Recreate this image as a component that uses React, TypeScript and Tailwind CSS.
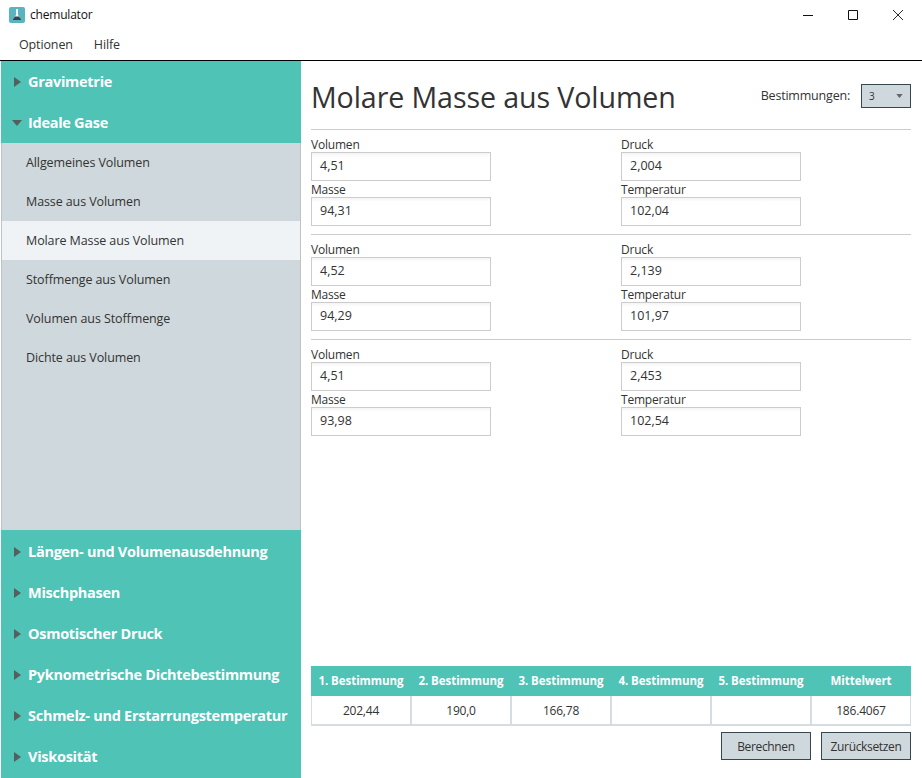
const FONT = "font-['Open_Sans','Noto_Sans',sans-serif]";

const TOP_SECTIONS = ["Gravimetrie", "Ideale Gase"];
const BOTTOM_SECTIONS = [
  "Längen- und Volumenausdehnung",
  "Mischphasen",
  "Osmotischer Druck",
  "Pyknometrische Dichtebestimmung",
  "Schmelz- und Erstarrungstemperatur",
  "Viskosität",
];
const ITEMS = [
  "Allgemeines Volumen",
  "Masse aus Volumen",
  "Molare Masse aus Volumen",
  "Stoffmenge aus Volumen",
  "Volumen aus Stoffmenge",
  "Dichte aus Volumen",
];
const GROUPS = [
  { volumen: "4,51", druck: "2,004", masse: "94,31", temperatur: "102,04" },
  { volumen: "4,52", druck: "2,139", masse: "94,29", temperatur: "101,97" },
  { volumen: "4,51", druck: "2,453", masse: "93,98", temperatur: "102,54" },
];
const COLUMNS = [
  { head: "1. Bestimmung", value: "202,44" },
  { head: "2. Bestimmung", value: "190,0" },
  { head: "3. Bestimmung", value: "166,78" },
  { head: "4. Bestimmung", value: "" },
  { head: "5. Bestimmung", value: "" },
  { head: "Mittelwert", value: "186.4067" },
];

function Section({ title, open, low }: { title: string; open?: boolean; low?: boolean }) {
  return (
    <div className={`flex h-[41px] items-center bg-[#4fc3b5] pl-[11px] ${low ? "pt-[2px]" : ""}`}>
      <svg width="10" height="10" viewBox="0 0 10 10" className="mr-[6px] shrink-0 fill-[#55605e]">
        {open ? <path d="M0 2h10L5 8z" /> : <path d="M2 0l7 5-7 5z" />}
      </svg>
      <span className="whitespace-nowrap text-[14.5px] font-bold tracking-[-0.28px] text-white">{title}</span>
    </div>
  );
}

function Field({ label, value }: { label: string; value: string }) {
  return (
    <div className="mb-[1px] flex flex-col">
      <span className="h-[15px] text-[12px] leading-[16px] tracking-[-0.2px] text-[#333]">{label}</span>
      <div className="flex h-[29px] w-[180px] items-center border border-[#ccc] bg-gradient-to-b from-[#f4f4f4] to-white to-[4px] pl-[8px] text-[12.5px] text-[#333]">
        {value}
      </div>
    </div>
  );
}

function ActionButton({ label }: { label: string }) {
  return (
    <div className="flex h-[28px] w-[90px] items-center justify-center border border-[#36474f] bg-[#cfd8dc] pt-[2px] text-[12px] tracking-[-0.35px] text-[#333]">
      {label}
    </div>
  );
}

export default function App() {
  return (
    <div className={`flex h-[778px] w-[922px] flex-col overflow-hidden bg-white ${FONT}`}>
      <div className="flex h-[30px] items-center justify-between">
        <div className="flex items-center pl-[9px]">
          <svg width="16" height="16" viewBox="0 0 16 16">
            <rect width="16" height="16" rx="2" fill="#5ab4bd" />
            <path d="M7 2h2v1H9v5l3 4v1H4v-1l3-4V3z" fill="#f2f6f6" />
            <path d="M6 9.5h4l2 2.5v1H4v-1z" fill="#33474f" />
          </svg>
          <span className="ml-[5px] text-[12px] tracking-[-0.2px] text-[#111]">chemulator</span>
        </div>
        <div className="mr-[19px] flex items-center gap-[35px] pb-[1px]">
          <svg width="10" height="10" viewBox="0 0 10 10" fill="none" stroke="#111" strokeWidth="1">
            <path d="M0 5.5h10" />
          </svg>
          <svg width="10" height="10" viewBox="0 0 10 10" fill="none" stroke="#111" strokeWidth="1">
            <path d="M.5.5h9v9h-9z" />
          </svg>
          <svg width="10" height="10" viewBox="0 0 10 10" fill="none" stroke="#111" strokeWidth="0.9">
            <path d="M0 0l10 10M10 0L0 10" />
          </svg>
        </div>
      </div>
      <div className="flex h-[31px] items-center gap-[21px] border-b border-black pl-[19px] text-[12.5px] tracking-[-0.13px] text-[#333]">
        <span>Optionen</span>
        <span>Hilfe</span>
      </div>

      <div className="flex min-h-0 flex-1">
        <div className="ml-[1px] flex w-[300px] shrink-0 flex-col">
          {TOP_SECTIONS.map((s, i) => (
            <Section key={s} title={s} open={i === 1} />
          ))}
          <div className="flex flex-1 flex-col border-x border-[#bcc4c8] bg-[#cfd8dc]">
            {ITEMS.map((item, i) => (
              <div
                key={item}
                className={`flex h-[39px] items-center pl-[24px] pt-[1px] text-[12.5px] tracking-[-0.1px] text-[#333] ${i === 2 ? "bg-[#eff3f6]" : ""}`}
              >
                {item}
              </div>
            ))}
          </div>
          {BOTTOM_SECTIONS.map((s) => (
            <Section key={s} title={s} low />
          ))}
          <div className="h-[2px] bg-[#4fc3b5]" />
        </div>

        <div className="box-content flex w-[600px] flex-col pl-[10px]">
          <div className="flex h-[69px] items-center justify-between border-b border-[#ccc]">
            <h1 className="pt-[5px] text-[28.6px] tracking-[-0.1px] text-[#333]">Molare Masse aus Volumen</h1>
            <div className="flex items-center pt-[2px]">
              <span className="mr-[11px] text-[12.5px] tracking-[-0.2px] text-[#333]">Bestimmungen:</span>
              <div className="flex h-[24px] w-[50px] items-center justify-between border border-[#36474f] bg-[#cfd8dc] px-[7px] text-[10px] text-[#333]">
                3
                <svg width="7" height="4" viewBox="0 0 8 5" className="fill-[#666]">
                  <path d="M0 0h8L4 5z" />
                </svg>
              </div>
            </div>
          </div>

          {GROUPS.map((g, i) => (
            <div
              key={i}
              className={`flex h-[105px] items-start pt-[7px] ${i < 2 ? "border-b border-[#ccc]" : ""}`}
            >
              <div className="flex w-[310px] flex-col">
                <Field label="Volumen" value={g.volumen} />
                <Field label="Masse" value={g.masse} />
              </div>
              <div className="flex flex-col">
                <Field label="Druck" value={g.druck} />
                <Field label="Temperatur" value={g.temperatur} />
              </div>
            </div>
          ))}

          <div className="flex-1" />

          <div className="grid grid-cols-6">
            {COLUMNS.map((c) => (
              <div key={c.head} className="flex flex-col">
                <div className="flex h-[30px] items-center justify-center whitespace-nowrap bg-[#4fc3b5] text-[11.5px] font-bold tracking-[-0.05px] text-white">
                  {c.head}
                </div>
                <div className="flex h-[30px] items-center justify-center border-x border-b-2 border-[#d5dde2] bg-white pt-[2px] text-[12px] tracking-[-0.2px] text-[#333]">
                  {c.value}
                </div>
              </div>
            ))}
          </div>
          <div className="mt-[6px] mb-[18px] flex justify-end gap-[10px]">
            <ActionButton label="Berechnen" />
            <ActionButton label="Zurücksetzen" />
          </div>
        </div>
      </div>
    </div>
  );
}
